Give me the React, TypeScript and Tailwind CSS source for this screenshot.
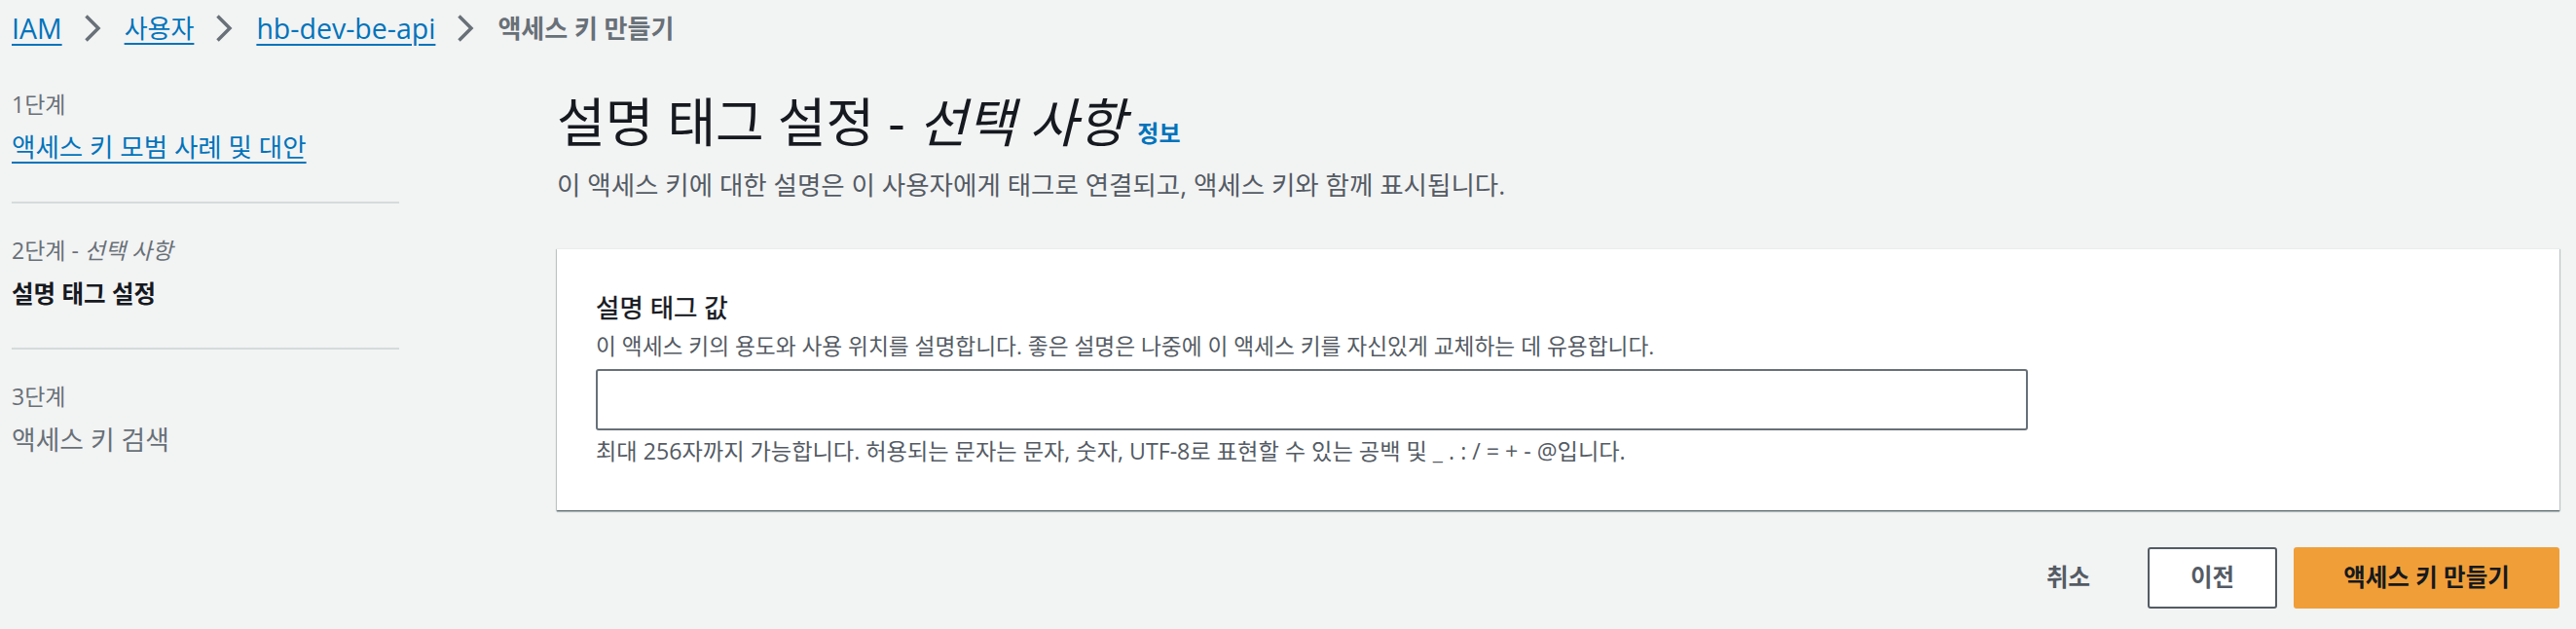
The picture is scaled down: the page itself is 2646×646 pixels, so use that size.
import React from "react";

function Chevron() {
  return (
    <svg
      width="18"
      height="30"
      viewBox="0 0 18 30"
      fill="none"
      className="ml-[22px] mr-[24px] shrink-0"
    >
      <path d="M2.5 2.5 L15 15 L2.5 27.5" stroke="#687078" strokeWidth="3.5" />
    </svg>
  );
}

export default function App() {
  return (
    <div className="min-h-[646px] w-full bg-[#f2f3f3] font-['Open_Sans','Noto_Sans_CJK_KR',sans-serif] text-[#16191f]">
      {/* Breadcrumb */}
      <nav className="flex h-[58px] items-center pl-[12px] text-[26px] leading-[36px]">
        <a className="text-[28.5px] text-[#0073bb] underline decoration-2 underline-offset-[5px]" href="#">
          IAM
        </a>
        <Chevron />
        <a className="text-[#0073bb] underline decoration-2 underline-offset-[5px]" href="#">
          사용자
        </a>
        <Chevron />
        <a className="text-[28.5px] text-[#0073bb] underline decoration-2 underline-offset-[5px]" href="#">
          hb-dev-be-api
        </a>
        <Chevron />
        <span className="font-bold text-[#687078]">액세스 키 만들기</span>
      </nav>

      <div className="flex pr-[17px]">
        {/* Left steps nav */}
        <aside className="ml-[12px] w-[398px] shrink-0 pt-[35px]">
          <div className="text-[23px] leading-[28px] text-[#687078]">1단계</div>
          <a
            href="#"
            className="mt-[11px] block text-[26.5px] leading-[39px] text-[#0073bb] underline decoration-2 underline-offset-[5px]"
          >
            액세스 키 모범 사례 및 대안
          </a>
          <div className="mb-[34px] mt-[36px] h-[2px] bg-[#d5dbdb]" />
          <div className="text-[23px] leading-[28px] text-[#687078]">
            2단계 - <i>선택 사항</i>
          </div>
          <div className="mt-[11px] text-[24.5px] font-bold leading-[39px] text-[#16191f]">
            설명 태그 설정
          </div>
          <div className="mb-[34px] mt-[36px] h-[2px] bg-[#d5dbdb]" />
          <div className="text-[23px] leading-[28px] text-[#687078]">3단계</div>
          <div className="mt-[11px] text-[26.8px] leading-[39px] text-[#687078]">
            액세스 키 검색
          </div>
        </aside>

        {/* Main content */}
        <main className="ml-[162px] min-w-0 flex-1 pt-[35px]">
          <h1 className="flex items-baseline text-[54px] font-normal leading-[64px] text-[#16191f]">
            <span>
              설명 태그 설정 - <i>선택 사항</i>
            </span>
            <a href="#" className="ml-[12px] text-[24px] font-bold leading-[28px] text-[#0073bb]">
              정보
            </a>
          </h1>
          <p className="mt-[14px] text-[26.5px] leading-[39px] text-[#545b64]">
            이 액세스 키에 대한 설명은 이 사용자에게 태그로 연결되고, 액세스 키와 함께 표시됩니다.
          </p>

          <section className="mt-[45px] border-t border-[#eaeded] bg-white pb-[47px] pl-[40px] pt-[41px] shadow-[0_1px_1px_0_rgba(0,28,36,0.3),0_2px_1px_0_rgba(0,28,36,0.2),1px_1px_1px_0_rgba(0,28,36,0.15),-1px_1px_1px_0_rgba(0,28,36,0.15)]">
            <div className="text-[26.5px] font-normal leading-[39px] text-[#16191f] [-webkit-text-stroke:0.4px_#16191f]">
              설명 태그 값
            </div>
            <div className="mt-[6px] text-[22.7px] leading-[28px] text-[#545b64]">
              이 액세스 키의 용도와 사용 위치를 설명합니다. 좋은 설명은 나중에 이 액세스 키를 자신있게 교체하는 데 유용합니다.
            </div>
            <input
              type="text"
              className="mt-[9px] block h-[63px] w-[1471px] rounded-[3px] border-2 border-[#687078] bg-white px-[14px] text-[24.5px] outline-none"
            />
            <div className="mt-[7px] text-[23.2px] leading-[28px] text-[#545b64]">
              최대 256자까지 가능합니다. 허용되는 문자는 문자, 숫자, UTF-8로 표현할 수 있는 공백 및 _ . : / = + - @입니다.
            </div>
          </section>

          <div className="mt-[38px] flex items-center justify-end">
            <button className="h-[63px] px-[26px] text-[24.5px] font-bold text-[#545b64]">취소</button>
            <button className="ml-[33px] h-[63px] w-[133px] rounded-[3px] border-2 border-[#545b64] bg-white text-[24.5px] font-bold text-[#545b64]">
              이전
            </button>
            <button className="ml-[17px] h-[63px] w-[273px] rounded-[3px] bg-[#f09f38] text-[24.5px] font-bold text-[#16191f]">
              액세스 키 만들기
            </button>
          </div>
        </main>
      </div>
    </div>
  );
}
